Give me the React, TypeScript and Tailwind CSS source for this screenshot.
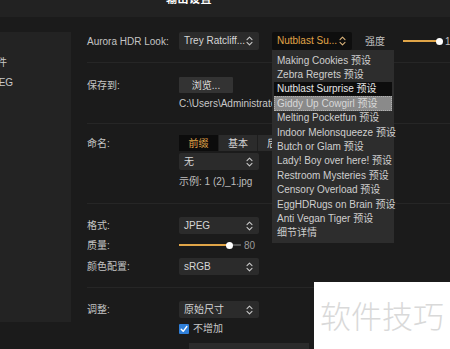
import React from 'react';

const font = "font-['Liberation_Sans','Noto_Sans_CJK_SC',sans-serif]";

const Chevrons: React.FC<{ color?: string }> = ({ color = '#c8c8c8' }) => (
  <svg width="7" height="10" viewBox="0 0 7 10" fill="none" stroke={color} strokeWidth="1.1" strokeLinecap="round" strokeLinejoin="round">
    <path d="M1 3.6 L3.5 1.2 L6 3.6" />
    <path d="M1 6.4 L3.5 8.8 L6 6.4" />
  </svg>
);

const Select: React.FC<{ value: string; className?: string }> = ({ value, className = '' }) => (
  <div className={`w-[80px] h-[17px] shrink-0 bg-[#2b2b2b] rounded-[2px] flex items-center justify-between pl-[5px] pr-[6px] text-[#d6d6d6] whitespace-nowrap ${className}`}>
    <span className="leading-none">{value}</span>
    <Chevrons />
  </div>
);

const Row: React.FC<{ label: string; children: React.ReactNode; className?: string }> = ({ label, children, className = '' }) => (
  <div className={`flex items-center ${className}`}>
    <div className="w-[92px] shrink-0 text-[#c4c4c4] whitespace-nowrap">{label}</div>
    {children}
  </div>
);

const presets = [
  'Making Cookies 预设',
  'Zebra Regrets 预设',
  'Nutblast Surprise 预设',
  'Giddy Up Cowgirl 预设',
  'Melting Pocketfun 预设',
  'Indoor Melonsqueeze 预设',
  'Butch or Glam 预设',
  'Lady! Boy over here! 预设',
  'Restroom Mysteries 预设',
  'Censory Overload 预设',
  'EggHDRugs on Brain 预设',
  'Anti Vegan Tiger 预设',
  '细节详情',
];

export default function App() {
  return (
    <div className={`relative w-[450px] h-[349px] overflow-hidden bg-[#1b1b1b] text-[10px] ${font}`}>
      {/* Header */}
      <div className="h-[17px] bg-[#222222] pl-[166px] overflow-hidden">
        <div className="mt-[-7px] text-[11px] leading-[12px] font-bold text-white tracking-[0.5px]">输出设置</div>
      </div>

      <div className="flex">
        {/* Left panel */}
        <div className="w-[71px] shrink-0 pt-[15px]">
          <div className="h-[290px] bg-[#232323] pt-[25px] text-[#c8c8c8] overflow-hidden whitespace-nowrap">
            <div className="ml-[-23px] leading-[12px]">源文件</div>
            <div className="ml-[-13px] mt-[8px] leading-[12px]">JPEG</div>
          </div>
        </div>

        {/* Settings */}
        <div className="flex-1 min-w-0 pl-[16px]">
          {/* Look */}
          <div className="pt-[15px] pb-[12px] border-b border-[#262626]">
            <div className="flex items-center h-[18px] whitespace-nowrap">
              <div className="w-[92px] shrink-0 text-[#c4c4c4]">Aurora HDR Look:</div>
              <Select value="Trey Ratcliff..." className="h-[18px]" />
              <div className="relative shrink-0 ml-[13px]">
                <div className="w-[80px] h-[18px] bg-[#0e0e0e] rounded-[2px] flex items-center justify-between pl-[5px] pr-[6px] text-[#e0a548]">
                  <span className="leading-none">Nutblast Su...</span>
                  <Chevrons color="#d9b27a" />
                </div>
                <div className="absolute left-0 top-full z-10 w-[122px] h-[193px] bg-[#2d2d2d] px-[2px] pt-[3px] text-[#cfcfcf]">
                  {presets.map((p, i) => (
                    <div
                      key={p}
                      className={`h-[14.4px] flex items-center pl-[3px] whitespace-nowrap ${
                        i === 2 ? 'bg-[#0d0d0d] text-[#e6e6e6]' : i === 3 ? 'bg-[#8a8a8a] text-[#d8d8d8] outline outline-dotted outline-[#b0b0b0] -outline-offset-1' : ''
                      }`}
                    >
                      {p}
                    </div>
                  ))}
                </div>
              </div>
              <div className="ml-[13px] shrink-0 text-[#c4c4c4]">强度</div>
              <div className="ml-[18px] shrink-0 flex items-center">
                <div className="w-[36px] h-[2px] bg-[#e0a548]" />
                <div className="w-[7px] h-[7px] rounded-full bg-white -ml-[3px]" />
                <span className="ml-[2px] text-[#bdbdbd]">100</span>
              </div>
            </div>
          </div>

          {/* Save to */}
          <div className="pt-[14px] pb-[13px] border-b border-[#262626]">
            <Row label="保存到:">
              <div className="w-[54px] h-[16px] bg-[#333333] rounded-[1px] flex items-center justify-center text-[#dcdcdc]">浏览...</div>
            </Row>
            <div className="ml-[92px] mt-[5px] leading-[12px] text-[#c8c8c8] whitespace-nowrap">C:\Users\Administrator\Pictures</div>
          </div>

          {/* Naming */}
          <div className="pt-[11px] pb-[15px] border-b border-[#262626]">
            <Row label="命名:">
              <div className="flex h-[16px]">
                <div className="w-[39px] bg-[#0c0c0c] text-[#e0a548] flex items-center justify-center">前缀</div>
                <div className="w-[39px] bg-[#2b2b2b] text-[#d6d6d6] flex items-center justify-center border-l border-[#1e1e1e]">基本</div>
                <div className="w-[39px] bg-[#2b2b2b] text-[#d6d6d6] flex items-center justify-center border-l border-[#1e1e1e]">后缀</div>
              </div>
            </Row>
            <div className="ml-[92px] mt-[2px]">
              <Select value="无" />
            </div>
            <div className="ml-[92px] mt-[6px] leading-[12px] text-[#bdbdbd]">示例: 1 (2)_1.jpg</div>
          </div>

          {/* Format */}
          <div className="pt-[13px] pb-[12px] border-b border-[#262626]">
            <Row label="格式:">
              <Select value="JPEG" />
            </Row>
            <Row label="质量:" className="mt-[5px] h-[12px]">
              <div className="flex items-center">
                <div className="w-[49px] h-[2px] bg-[#e0a548]" />
                <div className="w-[7px] h-[7px] rounded-full bg-white -ml-[2px]" />
                <div className="w-[8px] h-[2px] bg-[#555555]" />
                <span className="ml-[3px] text-[#9a9a9a]">80</span>
              </div>
            </Row>
            <Row label="颜色配置:" className="mt-[7px]">
              <Select value="sRGB" />
            </Row>
          </div>

          {/* Resize */}
          <div className="pt-[13px]">
            <Row label="调整:">
              <Select value="原始尺寸" />
            </Row>
            <div className="ml-[92px] mt-[5px] flex items-center h-[11px]">
              <div className="w-[10px] h-[10px] bg-[#2f7fd9] rounded-[1px] flex items-center justify-center">
                <svg width="8" height="8" viewBox="0 0 8 8" fill="none" stroke="white" strokeWidth="1.4" strokeLinecap="round" strokeLinejoin="round">
                  <path d="M1.2 4.2 L3.2 6.3 L6.8 1.5" />
                </svg>
              </div>
              <span className="ml-[4px] text-[#c8c8c8]">不增加</span>
            </div>
            <div className="ml-[102px] mt-[9px] w-[120px] h-[16px] bg-[#2b2b2b]" />
          </div>
        </div>
      </div>

      {/* Watermark */}
      <div className="absolute right-0 bottom-0 z-20 w-[136px] h-[67px] bg-white flex items-center justify-center">
        <span className="text-[31px] leading-none text-[#d9d9d9] font-['Noto_Sans_CJK_SC',sans-serif] font-light -mt-[3px]">软件技巧</span>
      </div>
    </div>
  );
}
